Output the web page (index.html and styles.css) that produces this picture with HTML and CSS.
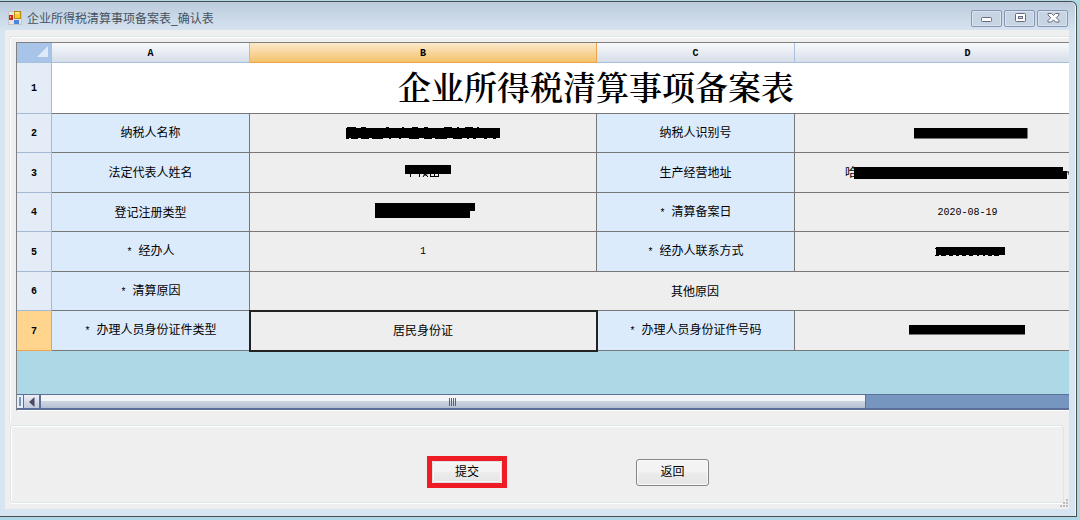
FILE: index.html
```
<!DOCTYPE html>
<html lang="zh-CN">
<head>
<meta charset="utf-8">
<meta name="viewport" content="width=device-width, initial-scale=1.0">
<title>企业所得税清算事项备案表_确认表</title>
<link rel="stylesheet" href="styles.css">
</head>
<body>
<div class="window">
  <div class="titlebar">
    <svg class="app-icon" width="14" height="14" viewBox="0 0 14 14">
      <rect x=".5" y=".5" width="13" height="13" fill="#e4e4e4" stroke="#c4c4c4"/>
      <rect x="1" y="4" width="4" height="5" fill="#c8281c"/>
      <rect x="2" y="5" width="1" height="2" fill="#f0a090"/>
      <rect x="6.5" y=".5" width="6" height="7" fill="#f9c930" stroke="#b88a10"/>
      <rect x="7" y="1" width="4" height="2" fill="#ffe98a"/>
      <rect x="6" y="9" width="5" height="4" fill="#4c84dc"/>
    </svg>
    <span class="caption">企业所得税清算事项备案表_确认表</span>
    <div class="win-btns">
      <button type="button" aria-label="最小化"><svg width="14" height="12" viewBox="0 0 14 12"><rect x="1.5" y="5.5" width="10" height="4" rx="1" fill="#fff" stroke="#66687c"/></svg></button>
      <button type="button" aria-label="最大化"><svg width="14" height="12" viewBox="0 0 14 12"><rect x="2.5" y="1.5" width="10" height="8" rx="1" fill="#fff" stroke="#66687c"/><rect x="5.5" y="4.5" width="4" height="2" fill="#d0dce8" stroke="#66687c"/></svg></button>
      <button type="button" aria-label="关闭"><svg width="14" height="12" viewBox="0 0 14 12"><path d="M2 1.5h3.5L7.500 3.500l2-2H13v1.500L10.300 5.700 13 8.500V10H9.500l-2-2.200L5.500 10H2V8.500l2.700-2.800L2 3z" fill="#fff" stroke="#66687c"/></svg></button>
    </div>
  </div>

  <div class="client">
    <div class="sheet-box">
      <div class="sheet">
        <table>
          <colgroup><col class="col-no"><col class="col-a"><col class="col-b"><col class="col-c"><col class="col-d"></colgroup>
          <thead>
            <tr>
              <th class="corner"><svg width="11" height="11" viewBox="0 0 11 11"><path d="M11 0v11H0z" fill="#dfe9f7"/></svg></th>
              <th>A</th><th class="cur">B</th><th>C</th><th>D</th>
            </tr>
          </thead>
          <tbody>
            <tr class="title-row"><th>1</th><td class="title" colspan="4">企业所得税清算事项备案表</td></tr>
            <tr>
              <th>2</th><td class="label">纳税人名称</td>
              <td><svg width="154" height="12" viewBox="0 0 154 12"><path d="M0 1h154v10H0z"/><path d="M1 .5h9m5 0h5m20 0h3m13 0h2m8 0h6m6 0h4m16 0h8m5 0h2m6 0h8m4 0h2M0 11.500h3m2 0h7m3 0h8m3 0h11m6 0h2m8 0h2m8 0h10m5 0h8m3 0h12m6 0h9m5 0h2m4 0h3m8 0h3m6 0h3" stroke="#000"/></svg></td>
              <td class="label">纳税人识别号</td>
              <td><svg width="120" height="11" viewBox="0 0 120 11"><path d="M6 0h113.500v10.500H6z"/></svg></td>
            </tr>
            <tr>
              <th>3</th><td class="label">法定代表人姓名</td>
              <td><svg width="56" height="16" viewBox="0 0 56 16"><path d="M10 0h46v9H10z"/><path d="M15.500 9v3M24.500 9v3M28 12l2-3 3 3M28.500 10h4M35 11.500h9M35.500 9v3M39.500 9v2M43.500 9v3" fill="none" stroke="#000"/></svg></td>
              <td class="label">生产经营地址</td>
              <td class="address">哈<svg width="236" height="13" viewBox="0 0 236 13"><path d="M0 0h209v4h4v8H0z"/><path d="M212 5h3v3" fill="none" stroke="#000"/></svg></td>
            </tr>
            <tr>
              <th>4</th><td class="label">登记注册类型</td>
              <td><svg width="104" height="20" viewBox="0 0 104 20"><path d="M4 0h100v8h-5v7H4z"/></svg></td>
              <td class="label"><span class="mono">* </span>清算备案日</td>
              <td class="mono">2020-08-19</td>
            </tr>
            <tr>
              <th>5</th><td class="label"><span class="mono">* </span>经办人</td>
              <td class="mono">1</td>
              <td class="label"><span class="mono">* </span>经办人联系方式</td>
              <td><svg width="74" height="12" viewBox="0 0 74 12"><path d="M5 1h69v8H5z"/><path d="M4 2.500h3M4 9.500h4m2 0h5m3 0h4m3 0h3m3 0h4m3 0h4m4 0h2m4 0h2m3 0h4m2 0h5" stroke="#000"/></svg></td>
            </tr>
            <tr><th>6</th><td class="label"><span class="mono">* </span>清算原因</td><td colspan="3">其他原因</td></tr>
            <tr>
              <th class="cur">7</th><td class="label"><span class="mono">* </span>办理人员身份证件类型</td>
              <td class="selected">居民身份证</td>
              <td class="label"><span class="mono">* </span>办理人员身份证件号码</td>
              <td><svg width="118" height="13" viewBox="0 0 118 13"><path d="M0 0h116v9.500H0z"/></svg></td>
            </tr>
          </tbody>
        </table>
        <div class="scrollbar">
          <span class="splitter"></span>
          <button type="button" class="arrow" aria-label="向左滚动"><svg width="6" height="10" viewBox="0 0 6 10"><path d="M5.500 0v10L0 5z" fill="#484c66"/></svg></button>
          <div class="track"><div class="thumb"><svg width="8" height="8" viewBox="0 0 8 8"><path d="M.5 0v8M2.500 0v8M4.500 0v8M6.500 0v8" stroke="#5a607c"/></svg></div></div>
        </div>
      </div>
    </div>

    <div class="actions">
      <span class="mark"><button type="button">提交</button></span>
      <button type="button">返回</button>
    </div>
    <svg class="grip" width="9" height="9" viewBox="0 0 9 9"><path d="M7 0h2v2H7zM4 3h2v2H4zM7 3h2v2H7zM1 6h2v2H1zM4 6h2v2H4zM7 6h2v2H7z" fill="#bcbcbc"/></svg>
  </div>
</div>
</body>
</html>
```
FILE: styles.css
```
* { box-sizing: border-box; }
body {
  margin: 0;
  padding: 1px 3px 3px 0;
  background: #add8e6;
  color: #000;
  font: 12px/16px "Liberation Sans", "Noto Sans CJK SC", sans-serif;
}
button { font: inherit; color: inherit; padding: 0; }
svg { display: block; }

.window {
  padding: 0 7px 7px 5px;
  border: solid #4c4c4c;
  border-width: 1px 1px 1px 0;
  border-radius: 0 6px 0 0;
  background: linear-gradient(#bccbdc, #d7e5f2 30px);
  box-shadow: inset -1px 0 #f4f9fd;
}
.titlebar {
  display: flex;
  align-items: center;
  height: 28px;
  padding: 4px 1px 0 3px;
}
.app-icon { margin-right: 5px; }
.caption { flex: 1; padding-top: 1px; color: #46525e; }
.win-btns { display: flex; gap: 2px; }
.win-btns button {
  display: flex;
  align-items: center;
  justify-content: center;
  width: 31px;
  height: 17px;
  border: 1px solid #8796b4;
  border-radius: 2px;
  background: #c6d4e3;
  box-shadow: inset 0 0 0 1px #d9e4ef;
}

.client {
  position: relative;
  padding: 6px 0 6px 4px;
  background: #efefef;
}
.sheet-box {
  padding: 5px 0 11px 6px;
  border: solid #dce5e8;
  border-width: 1px 0 0 1px;
  border-radius: 3px 0 0 0;
  box-shadow: inset 1px 1px #fff;
}
.sheet {
  overflow: hidden;
  border: solid #808080;
  border-width: 1px 0 0 1px;
  border-bottom: 1px solid #fff;
  background: #add8e6;
}

table {
  width: 1124px;
  height: 308px;
  margin-bottom: 43px;
  table-layout: fixed;
  border-collapse: separate;
  border-spacing: 0;
  text-align: center;
}
.col-no { width: 35px; }
.col-a, .col-c { width: 198px; }
.col-b { width: 347px; }
th, td { padding: 0; vertical-align: middle; }
th { padding-top: 2px; font: bold 10px/12px "Liberation Mono", monospace; }
thead tr { height: 20px; }
tbody tr { height: 39px; }
thead th {
  border: solid #a9bfdb;
  border-width: 0 1px 1px 0;
  background: linear-gradient(#f8f9fb, #d6deea);
}
thead th.cur {
  border-color: #f0a24a;
  background: linear-gradient(#fbe9cb, #f3c36b);
}
thead .corner { padding: 0 3px 2px 20px; background: #a9c4e9; }
tbody th {
  border: solid #a3bad6;
  border-width: 0 1px 1px 0;
  background: #e4ecf7;
}
tbody th.cur { border-color: #efa14b; background: #ffd58d; }
td {
  padding-top: 1px;
  border: solid #777;
  border-width: 0 1px 1px 0;
  background: #eee;
}
td svg { margin: 0 auto; }
.label { background: #dcebfc; }
.mono { font-family: "Liberation Mono", monospace; font-size: 10px; white-space: pre; }
tbody .title-row { height: 50px; }
.title {
  padding: 0 0 4px;
  background: #fff;
  font: 600 33px/40px "Noto Serif CJK SC", "Noto Sans CJK SC", serif;
}
.address { white-space: nowrap; }
.address svg { display: inline-block; vertical-align: middle; margin-left: -3px; }
.selected { outline: 2px solid #222; outline-offset: -1px; }

.scrollbar {
  display: flex;
  height: 16px;
  border: solid #5d7099;
  border-width: 1px 0 2px;
  background: #7696bf;
}
.splitter { width: 6px; border: 2px solid #e2effb; background: #7696bf; }
.arrow {
  display: flex;
  align-items: center;
  justify-content: center;
  width: 17px;
  border: solid #5d7099;
  border-width: 0 1px;
  background: linear-gradient(#eef0f5, #c0cadb);
}
.track { flex: 1; }
.thumb {
  display: flex;
  align-items: center;
  justify-content: center;
  width: calc(100% - 203px);
  height: 100%;
  border: solid #5d7099;
  border-width: 0 1px;
  background: linear-gradient(#f3f4f8 45%, #ced6e2 50%, #b2bfd2);
}

.actions {
  display: flex;
  align-items: center;
  justify-content: center;
  gap: 129px;
  height: 78px;
  margin: 3px 5px 0 1px;
  padding: 16px 0 0 62px;
  border: 1px solid #dce5e8;
  border-radius: 3px;
  box-shadow: inset 1px 1px #fff, 0 1px #fff;
}
.actions button {
  width: 73px;
  height: 27px;
  border: 1px solid #858585;
  border-radius: 3px;
  background: linear-gradient(#f3f3f3 45%, #ebebeb 55%, #e6e6e6);
  box-shadow: inset 0 0 0 1px #fafafa;
}
.actions .mark { border: 5px solid #ee1c25; }
.actions .mark button { display: block; width: 70px; height: 22px; border-color: #ddd; }
.grip { position: absolute; right: 1px; bottom: 1px; }
```
